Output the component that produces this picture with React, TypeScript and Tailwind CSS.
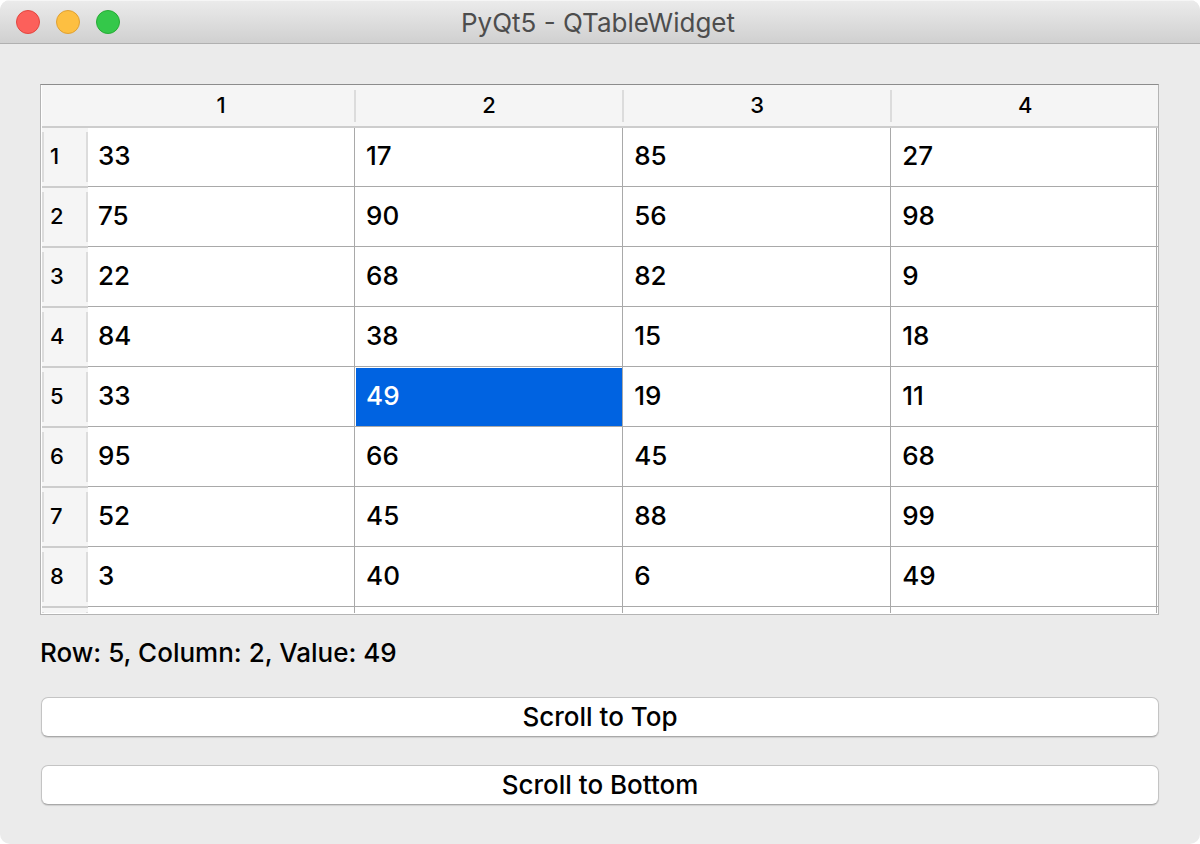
import { useRef, useState } from "react";

const columns = ["1", "2", "3", "4"];

const rows = [
  [33, 17, 85, 27],
  [75, 90, 56, 98],
  [22, 68, 82, 9],
  [84, 38, 15, 18],
  [33, 49, 19, 11],
  [95, 66, 45, 68],
  [52, 45, 88, 99],
  [3, 40, 6, 49],
];

// Grid lines sit one pixel inside the right and bottom edge of every cell
const gridLines =
  "bg-[linear-gradient(to_top,transparent_1px,#a9a9a9_1px,#a9a9a9_2px,transparent_2px),linear-gradient(to_left,transparent_1px,#a9a9a9_1px,#a9a9a9_2px,transparent_2px)]";

function TitleBar({ title }: { title: string }) {
  return (
    <header className="grid h-11 shrink-0 grid-cols-[1fr_auto_1fr] items-center border-t border-b border-t-[#f6f6f6] border-b-[#b0b0b0] bg-linear-to-b from-[#ebebeb] to-[#d0d0d0] pr-5 pl-4">
      <div className="flex gap-4">
        <button type="button" aria-label="Close" className="size-6 rounded-full border border-[#e2463f] bg-[#fc605b]" />
        <button type="button" aria-label="Minimize" className="size-6 rounded-full border border-[#dfa033] bg-[#fdbf41]" />
        <button type="button" aria-label="Zoom" className="size-6 rounded-full border border-[#27ab35] bg-[#34c84a]" />
      </div>
      <h1 className="pt-0.5 text-[26px] leading-8 text-[#4d4d4d]">{title}</h1>
    </header>
  );
}

interface PushButtonProps {
  label: string;
  onClick: () => void;
}

function PushButton({ label, onClick }: PushButtonProps) {
  return (
    <button
      type="button"
      onClick={onClick}
      className="flex h-10 shrink-0 items-center justify-center rounded-[7px] border border-[#c4c4c4] border-b-[#a9a9a9] bg-white text-[26px] leading-8 font-medium shadow-[0_1px_1px_rgba(0,0,0,0.12)]"
    >
      {label}
    </button>
  );
}

export default function App() {
  const [selected, setSelected] = useState({ row: 4, column: 1 });
  const viewRef = useRef<HTMLDivElement>(null);

  const scrollTo = (top: number) => viewRef.current?.scrollTo({ top });

  return (
    <div className="h-screen bg-white font-['Inter','Liberation_Sans',sans-serif] text-black">
      <div className="flex h-full flex-col overflow-hidden rounded-[10px] bg-[#ebebeb]">
        <TitleBar title="PyQt5 - QTableWidget" />

        <main className="flex min-h-0 flex-1 flex-col pt-10 pr-[41px] pb-[39px] pl-10">
          <div className="flex min-h-0 flex-1 flex-col border border-[#b4b4b4] border-t-[#8c8c8c] bg-white pb-px pl-px">
            <div ref={viewRef} className="min-h-0 flex-1 overflow-y-auto [scrollbar-width:none]">
              <table className="w-full table-fixed border-separate border-spacing-0">
                <colgroup>
                  <col className="w-[46px]" />
                  <col className="w-[24.02%]" />
                  <col className="w-[24.02%]" />
                  <col className="w-[24.02%]" />
                  <col />
                </colgroup>
                <thead>
                  <tr>
                    <td className="sticky top-0 h-[43px] border-b-2 border-[#cdcdcd] bg-[#f5f5f5] p-0" />
                    {columns.map((name, i) => (
                      <th key={name} scope="col" className="sticky top-0 h-[43px] border-b-2 border-[#cdcdcd] bg-[#f5f5f5] p-0 font-medium">
                        <div
                          className={
                            i < columns.length - 1
                              ? "h-8 border-r-2 border-[#dcdcdc] text-[22px] leading-[30px]"
                              : "h-8 text-[22px] leading-[30px]"
                          }
                        >
                          {name}
                        </div>
                      </th>
                    ))}
                  </tr>
                </thead>
                <tbody>
                  {rows.map((row, r) => (
                    <tr key={r}>
                      <th scope="row" className="h-15 border-b-2 border-[#cdcdcd] bg-[#f5f5f5] p-0 text-left font-medium">
                        <div className="h-[50px] border-x-2 border-[#dcdcdc] pl-1.5 text-[22px] leading-[48px]">{r + 1}</div>
                      </th>
                      {row.map((value, c) => {
                        const active = selected.row === r && selected.column === c;
                        return (
                          <td
                            key={c}
                            onClick={() => setSelected({ row: r, column: c })}
                            className={`h-15 bg-white pt-0 pr-0.5 pb-0.5 pl-0 align-top ${gridLines}`}
                          >
                            <div
                              className={
                                active
                                  ? "h-[58px] bg-[#0063e1] pl-2.5 text-[26px] leading-[56px] font-medium text-white"
                                  : "h-[58px] pl-2.5 text-[26px] leading-[56px] font-medium"
                              }
                            >
                              {value}
                            </div>
                          </td>
                        );
                      })}
                    </tr>
                  ))}
                  {/* trailing row, only its top edge is in view */}
                  <tr>
                    <td className="h-15 border-b-2 border-[#cdcdcd] bg-[#f5f5f5] p-0">
                      <div className="h-[50px] border-x-2 border-[#dcdcdc]" />
                    </td>
                    {columns.map((name) => (
                      <td key={name} className={`h-15 bg-white p-0 ${gridLines}`} />
                    ))}
                  </tr>
                </tbody>
              </table>
            </div>
          </div>

          <p className="mt-[22px] mb-7 text-[26px] leading-8 font-medium">
            Row: {selected.row + 1}, Column: {selected.column + 1}, Value: {rows[selected.row][selected.column]}
          </p>

          <div className="flex flex-col gap-7 pl-px">
            <PushButton label="Scroll to Top" onClick={() => scrollTo(0)} />
            <PushButton label="Scroll to Bottom" onClick={() => scrollTo(viewRef.current?.scrollHeight ?? 0)} />
          </div>
        </main>
      </div>
    </div>
  );
}
